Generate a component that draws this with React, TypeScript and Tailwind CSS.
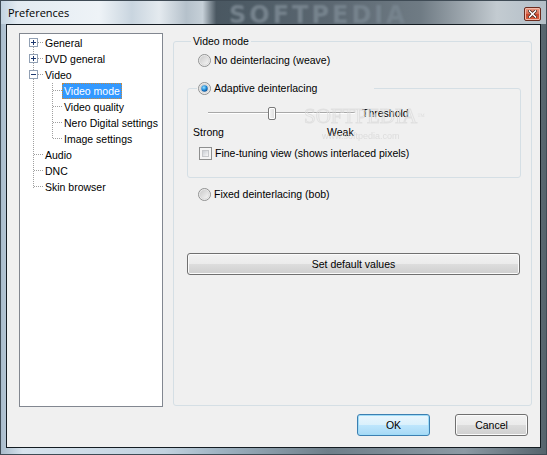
import React from 'react';

const ui = "font-['Liberation_Sans',Arial,sans-serif] text-[10.5px] leading-[14px] text-black";

function Radio({ checked }: { checked?: boolean }) {
  return (
    <svg width="13" height="13" viewBox="0 0 13 13" className="shrink-0">
      <defs>
        <linearGradient id="rbFill" x1="0" y1="0" x2="1" y2="1">
          <stop offset="0" stopColor="#c9c9c9" />
          <stop offset="1" stopColor="#f7f7f7" />
        </linearGradient>
        <radialGradient id="rbDot" cx="0.4" cy="0.35" r="0.75">
          <stop offset="0" stopColor="#9be3ff" />
          <stop offset="0.55" stopColor="#1c86d6" />
          <stop offset="1" stopColor="#0b3f78" />
        </radialGradient>
      </defs>
      <circle cx="6.5" cy="6.5" r="6" fill="#f4f4f4" stroke="#8f9090" />
      <circle cx="6.5" cy="6.5" r="4.6" fill="url(#rbFill)" stroke="#d4d4d4" strokeWidth="0.8" />
      {checked && <circle cx="6.5" cy="6.5" r="3.2" fill="url(#rbDot)" />}
    </svg>
  );
}

function Checkbox() {
  return (
    <span className="w-[13px] h-[13px] shrink-0 border border-[#8e8f8f] bg-[#f4f4f4] p-[2px]">
      <span className="block w-full h-full border border-[#c6c8cb] bg-[linear-gradient(135deg,#cbcfd5,#f6f6f6)]" />
    </span>
  );
}

function TreeLines() {
  const v = { stroke: '#a0a0a0', strokeDasharray: '1 1', shapeRendering: 'crispEdges' as const };
  const box = (y: number, open: boolean) => (
    <g key={y}>
      <rect x="9.5" y={y - 3.5} width="8" height="8" fill="#fff" stroke="#91a0b4" shapeRendering="crispEdges" />
      <line x1="11" y1={y + 0.5} x2="16" y2={y + 0.5} stroke="#1f3a70" shapeRendering="crispEdges" />
      {!open && <line x1="13.5" y1={y - 2} x2="13.5" y2={y + 3} stroke="#1f3a70" shapeRendering="crispEdges" />}
      <line x1="18" y1={y + 0.5} x2="23" y2={y + 0.5} {...v} />
    </g>
  );
  return (
    <svg width="60" height="160" className="absolute left-0 top-0 pointer-events-none">
      <line x1="13.5" y1="9" x2="13.5" y2="154" {...v} />
      {box(8, false)}
      {box(24, false)}
      {box(40, true)}
      {[120, 136, 152].map((y) => (
        <line key={y} x1="14" y1={y + 0.5} x2="23" y2={y + 0.5} {...v} />
      ))}
      <line x1="32.5" y1="49" x2="32.5" y2="105" {...v} />
      {[56, 72, 88, 104].map((y) => (
        <line key={y} x1="33" y1={y + 0.5} x2="42" y2={y + 0.5} {...v} />
      ))}
    </svg>
  );
}

const treeItems: { label: string; level: number; selected?: boolean }[] = [
  { label: 'General', level: 0 },
  { label: 'DVD general', level: 0 },
  { label: 'Video', level: 0 },
  { label: 'Video mode', level: 1, selected: true },
  { label: 'Video quality', level: 1 },
  { label: 'Nero Digital settings', level: 1 },
  { label: 'Image settings', level: 1 },
  { label: 'Audio', level: 0 },
  { label: 'DNC', level: 0 },
  { label: 'Skin browser', level: 0 },
];

function Button({ label, primary, className = '' }: { label: string; primary?: boolean; className?: string }) {
  return (
    <div
      className={
        'h-[22px] flex items-center justify-center rounded-[3px] border ' +
        (primary
          ? 'border-[#3c7fb1] bg-[linear-gradient(#eaf6fd_0%,#d9f0fc_50%,#bee6fd_50%,#a7d9f5_100%)] shadow-[inset_0_0_0_1px_#9fdcf8] '
          : 'border-[#707070] bg-[linear-gradient(#f2f2f2_0%,#ebebeb_50%,#dddddd_50%,#cfcfcf_100%)] shadow-[inset_0_0_0_1px_#fbfbfb] ') +
        className
      }
    >
      {label}
    </div>
  );
}

export default function App() {
  return (
    <div className={'w-[547px] h-[455px] border border-[#3f4b55] flex flex-col overflow-hidden relative bg-[linear-gradient(90deg,#a9bccc_0%,#d7e3ed_4%,#c2d2df_30%,#9fb3c2_40%,#6f7f8a_60%,#8c9aa4_85%,#56646d_100%)] ' + ui}>
      {/* title bar */}
      <div className="h-[23px] shrink-0 flex items-start justify-between pl-[7px] pr-[5px] relative bg-[linear-gradient(90deg,#c3d3e0_0%,#e3ebf2_3%,#eef3f7_18%,#c9d5df_24%,#e4eaef_29%,#b5c1cb_34%,#c6d0d8_37%,#4a5761_39.5%,#4b5963_42%,#5b6771_60%,#6f7b84_77%,#a4adb4_86%,#c3cbd1_91%,#b3bec7_100%)]">
        <span className="mt-[4px] font-['Open_Sans',sans-serif] text-[11px] leading-[15px] text-black relative z-10">Preferences</span>
        <span className="absolute left-[228px] top-[2px] font-['DejaVu_Sans',sans-serif] text-[24px] leading-[24px] tracking-[3px] font-bold text-[#76838d] blur-[1.2px]">SOFTPEDIA</span>
        <div className="mt-[6px] w-[17px] h-[14px] rounded-[2px] border border-[#6b2b1e] bg-[linear-gradient(#ec9c86_0%,#d86a50_50%,#c8452c_51%,#d9603f_100%)] flex items-center justify-center relative z-10 shadow-[inset_0_0_0_1px_#f2b9a8]">
          <svg width="9" height="8" viewBox="0 0 9 8">
            <path d="M1.5 1 L7.5 7 M7.5 1 L1.5 7" stroke="#3a1a12" strokeWidth="3" strokeLinecap="square" />
            <path d="M1.5 1 L7.5 7 M7.5 1 L1.5 7" stroke="#ffffff" strokeWidth="1.6" strokeLinecap="square" />
          </svg>
        </div>
      </div>

      {/* client area */}
      <div className="flex-1 ml-[5px] mr-[5px] mb-[6px] border border-[#141c22] bg-[#f0f0f0] flex flex-col pt-[8px] pl-[12px] relative">
        <div className="flex items-start">
          {/* tree */}
          <div className="w-[144px] h-[374px] shrink-0 border border-[#828790] bg-white pt-[1px] relative">
            <TreeLines />
            {treeItems.map((it) => (
              <div key={it.label} className={'h-[16px] flex items-center ' + (it.level === 0 ? 'pl-[23px]' : 'pl-[42px]')}>
                <span
                  className={
                    'h-[16px] px-[2px] flex items-center whitespace-nowrap ' +
                    (it.selected ? 'bg-[#3399ff] text-white outline-1 outline-dotted outline-[#c98a3a] -outline-offset-1' : '')
                  }
                >
                  {it.label}
                </span>
              </div>
            ))}
          </div>

          {/* group box */}
          <fieldset className="ml-[10px] mt-[1px] w-[359px] h-[372px] shrink-0 border border-[#d5dfe5] rounded-[3px] pl-[13px] pr-[10px]">
            <legend className="ml-[4px] px-[2px] leading-[14px]">Video mode</legend>

            <div className="h-[16px] mt-[4px] pl-[11px] flex items-center gap-[3px]">
              <Radio />
              <span>No deinterlacing (weave)</span>
            </div>

            <fieldset className="mt-[13px] border border-[#d5dfe5] rounded-[3px] pb-[16px]">
              <legend className="ml-[9px] w-[177px] pl-[1px] h-[14px] flex items-center gap-[3px]">
                <Radio checked />
                <span>Adaptive deinterlacing</span>
              </legend>

              <div className="h-[16px] mt-[10px] ml-[20px] flex items-center">
                <div className="w-[147px] h-[13px] relative shrink-0">
                  <div className="absolute left-0 right-0 top-[5px] h-[2px] border-t border-[#a8a8a8] border-b border-b-[#ffffff]" />
                  <div className="absolute left-[60px] top-0 w-[8px] h-[13px] rounded-[2px] border border-[#7a7a7a] bg-[linear-gradient(90deg,#f6f6f6,#dcdcdc)] shadow-[inset_0_0_0_1px_#ffffff]" />
                </div>
                <span className="ml-[7px]">Threshold</span>
              </div>

              <div className="h-[14px] mt-[4px] pl-[5px] flex items-center">
                <span className="w-[134px]">Strong</span>
                <span>Weak</span>
              </div>

              <div className="h-[16px] mt-[6px] pl-[11px] flex items-center gap-[3px]">
                <Checkbox />
                <span>Fine-tuning view (shows interlaced pixels)</span>
              </div>
            </fieldset>

            <div className="h-[16px] mt-[8px] pl-[11px] flex items-center gap-[3px]">
              <Radio />
              <span>Fixed deinterlacing (bob)</span>
            </div>

            <Button label="Set default values" className="mt-[51px] mr-[1px]" />
          </fieldset>
        </div>

        {/* buttons */}
        <div className="mt-[7px] mr-[12px] flex justify-end gap-[25px]">
          <Button label="OK" primary className="w-[73px]" />
          <Button label="Cancel" className="w-[73px]" />
        </div>

        {/* watermark */}
        <div className="absolute left-[297px] top-[81px] pointer-events-none flex flex-col items-start opacity-70">
          <span className="font-['Liberation_Serif',serif] text-[21px] leading-[20px] text-transparent [-webkit-text-stroke:1px_#dadada]">
            SOFTPEDIA<sup className="text-[8px] [-webkit-text-stroke:0px] text-[#d8d8d8]">™</sup>
          </span>
          <span className="ml-[18px] mt-[6px] text-[9px] leading-[9px] text-[#d4d4d4]">www.softpedia.com</span>
        </div>
      </div>
    </div>
  );
}
